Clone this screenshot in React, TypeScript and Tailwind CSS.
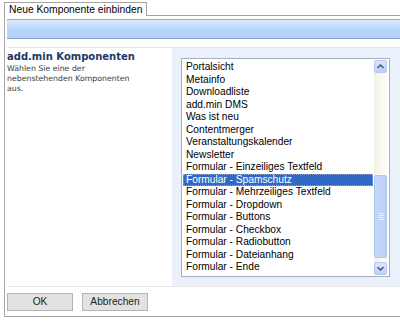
import React from "react";

const items = [
  "Portalsicht",
  "Metainfo",
  "Downloadliste",
  "add.min DMS",
  "Was ist neu",
  "Contentmerger",
  "Veranstaltungskalender",
  "Newsletter",
  "Formular - Einzeiliges Textfeld",
  "Formular - Spamschutz",
  "Formular - Mehrzeiliges Textfeld",
  "Formular - Dropdown",
  "Formular - Buttons",
  "Formular - Checkbox",
  "Formular - Radiobutton",
  "Formular - Dateianhang",
  "Formular - Ende",
];

const SELECTED = "Formular - Spamschutz";

function Chevron({ up }: { up?: boolean }) {
  return (
    <svg width="7" height="5" viewBox="0 0 7 5">
      <path
        d={up ? "M0.5 4 L3.5 1 L6.5 4" : "M0.5 1 L3.5 4 L6.5 1"}
        fill="none"
        stroke="#4d6185"
        strokeWidth="1.6"
      />
    </svg>
  );
}

function ScrollBar() {
  return (
    <div className="ml-[1px] my-[1px] w-[13px] flex flex-col bg-gradient-to-r from-[#f3f1e6] to-[#fdfdf8]">
      <div className="h-[13px] rounded-[2px] border border-[#b7c9f1] bg-gradient-to-b from-[#dce7fd] to-[#bccffa] flex items-center justify-center">
        <Chevron up />
      </div>
      <div className="h-[102px]" />
      <div className="h-[83px] rounded-[2px] border border-[#b0c4f2] bg-gradient-to-r from-[#c7d7fc] to-[#bcd0fa] flex items-center justify-center">
        <div className="flex flex-col gap-[1px]">
          <div className="w-[6px] h-[1px] bg-[#e6eeff]" />
          <div className="w-[6px] h-[1px] bg-[#e6eeff]" />
          <div className="w-[6px] h-[1px] bg-[#e6eeff]" />
          <div className="w-[6px] h-[1px] bg-[#e6eeff]" />
        </div>
      </div>
      <div className="h-[4px]" />
      <div className="h-[13px] rounded-[2px] border border-[#b7c9f1] bg-gradient-to-b from-[#dce7fd] to-[#bccffa] flex items-center justify-center">
        <Chevron />
      </div>
    </div>
  );
}

export default function App() {
  return (
    <div
      className="w-[400px] h-[321px] bg-white overflow-hidden pt-[2px] text-black"
      style={{ fontFamily: '"Liberation Sans", Arial, sans-serif' }}
    >
      {/* Reiter */}
      <div className="flex h-[14px] pl-[4px]">
        <div className="border-t border-l border-r border-[#a4a4a4] bg-white px-[4px] text-[10.3px] leading-[12px] pt-[1px] whitespace-nowrap">
          Neue Komponente einbinden
        </div>
        <div className="flex-1 border-b border-[#a4a4a4]" />
      </div>

      <div className="ml-[4px] border-l border-b border-[#a8a8a8] pl-[2px] pt-[3px] pb-[5px]">
        {/* Blaue Leiste */}
        <div className="h-[20px] border-t border-b border-t-[#9cadc4] border-b-[#8ea8cc] bg-gradient-to-b from-[#dce9fd] via-[#bad7fc] to-[#b3d2fb]" />

        {/* Inhalt */}
        <div className="mt-[8px] h-[240px] flex border-t border-b border-[#e2e4e8]">
          <div className="w-[165px] pt-[3px]">
            <div
              className="text-[10px] leading-[12px] font-bold text-[#1e3766]"
              style={{ fontFamily: '"DejaVu Sans", Verdana, sans-serif' }}
            >
              add.min Komponenten
            </div>
            <div
              className="text-[7.8px] leading-[10px] text-[#3a3a3a] mt-[1px] w-[130px]"
              style={{ fontFamily: '"DejaVu Sans", Verdana, sans-serif' }}
            >
              Wählen Sie eine der nebenstehenden Komponenten aus.
            </div>
          </div>

          <div className="flex-1 bg-[#eaf1fb] pl-[9px] pt-[10px]">
            <div className="w-[209px] h-[219px] border border-[#a3b0c2] bg-white flex">
              <div className="pl-[1px] pt-[2px] w-[191px] flex flex-col">
                {items.map((item) => {
                  const sel = item === SELECTED;
                  return (
                    <div
                      key={item}
                      className={
                        sel
                          ? "h-[12.5px] pl-[3px] text-[10.2px] leading-[12.5px] whitespace-nowrap bg-[#316ac5] text-white outline-1 outline-dotted outline-[#8aa6d8] -outline-offset-1"
                          : "h-[12.5px] pl-[3px] text-[10.2px] leading-[12.5px] whitespace-nowrap"
                      }
                    >
                      {item}
                    </div>
                  );
                })}
              </div>
              <ScrollBar />
            </div>
          </div>
        </div>

        {/* Buttons */}
        <div className="flex gap-[9px] pt-[6px]">
          <button className="w-[66px] h-[18px] border border-[#b4b4b4] bg-[#e2e2e2] text-[10.2px] leading-[16px] text-[#222]">
            OK
          </button>
          <button className="w-[66px] h-[18px] border border-[#b4b4b4] bg-[#e2e2e2] text-[10.2px] leading-[16px] text-[#222]">
            Abbrechen
          </button>
        </div>
      </div>
    </div>
  );
}
